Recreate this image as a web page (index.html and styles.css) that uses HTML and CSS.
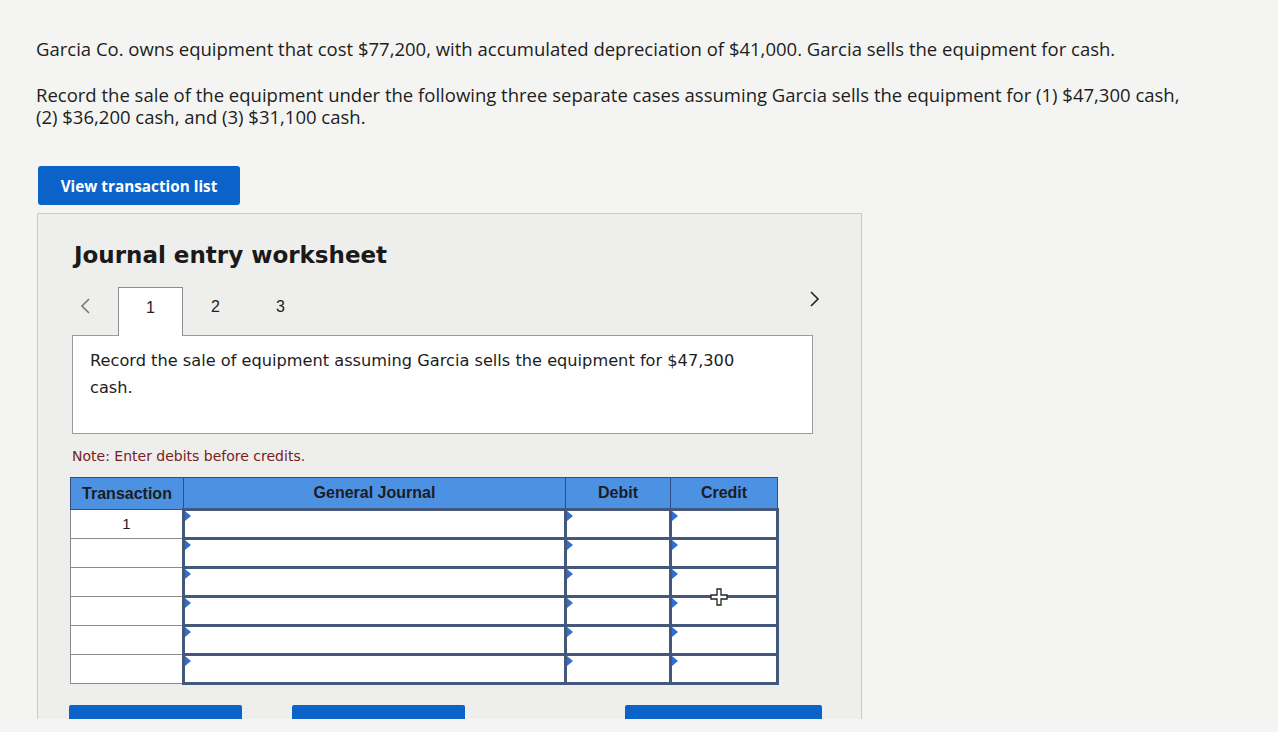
FILE: index.html
```html
<!DOCTYPE html>
<html>
<head>
<meta charset="utf-8">
<link rel="stylesheet" href="styles.css">
</head>
<body>
<div class="page">
  <p class="intro">Garcia Co. owns equipment that cost $77,200, with accumulated depreciation of $41,000. Garcia sells the equipment for cash.</p>
  <p class="intro second">Record the sale of the equipment under the following three separate cases assuming Garcia sells the equipment for (1) $47,300 cash, (2) $36,200 cash, and (3) $31,100 cash.</p>
  <button class="btn-list">View transaction list</button>

  <div class="panel">
    <h2 class="title">Journal entry worksheet</h2>
    <div class="tabs">
      <span class="chev left"><svg width="14" height="18" viewBox="0 0 14 18"><path d="M11 2 L4 9 L11 16" fill="none" stroke="#777" stroke-width="1.6"/></svg></span>
      <span class="tab active">1</span>
      <span class="tab">2</span>
      <span class="tab">3</span>
      <span class="spacer"></span>
      <span class="chev right"><svg width="14" height="18" viewBox="0 0 14 18"><path d="M3 2 L10 9 L3 16" fill="none" stroke="#222" stroke-width="1.6"/></svg></span>
    </div>
    <div class="question">
      <p>Record the sale of equipment assuming Garcia sells the equipment for $47,300 cash.</p>
    </div>
    <p class="note">Note: Enter debits before credits.</p>

    <table class="journal">
      <thead>
        <tr><th class="c-tx">Transaction</th><th class="c-gj">General Journal</th><th class="c-dr">Debit</th><th class="c-cr">Credit</th></tr>
      </thead>
      <tbody>
        <tr><td class="tx">1</td><td class="in"></td><td class="in"></td><td class="in"></td></tr>
        <tr><td class="tx"></td><td class="in"></td><td class="in"></td><td class="in"></td></tr>
        <tr><td class="tx"></td><td class="in"></td><td class="in"></td><td class="in"></td></tr>
        <tr><td class="tx"></td><td class="in"></td><td class="in"></td><td class="in cursor-cell"><svg class="cursor" width="18" height="18" viewBox="0 0 18 18"><path d="M7 1 H11 V7 H17 V11 H11 V17 H7 V11 H1 V7 H7 Z" fill="#fff" stroke="#222" stroke-width="1.3"/></svg></td></tr>
        <tr><td class="tx"></td><td class="in"></td><td class="in"></td><td class="in"></td></tr>
        <tr><td class="tx"></td><td class="in"></td><td class="in"></td><td class="in"></td></tr>
      </tbody>
    </table>

    <div class="actions">
      <button class="act a1"></button>
      <button class="act a2"></button>
      <button class="act a3"></button>
    </div>
  </div>
</div>
</body>
</html>
```

FILE: styles.css
```css
* { box-sizing: border-box; }
html, body { margin: 0; padding: 0; }
body {
  background: #f4f4f2;
  width: 1278px;
  height: 732px;
  overflow: hidden;
  font-family: "Open Sans", "Lato", sans-serif;
  color: #1d1d1d;
}
.page {
  padding: 38px 0 0 36px;
}
.intro {
  margin: 0;
  font-size: 18.5px;
  line-height: 22px;
  width: 1155px;
}
.intro.second {
  margin-top: 24px;
}
.btn-list {
  display: block;
  margin: 38px 0 0 2px;
  width: 202px;
  height: 39px;
  background: #0b62c9;
  color: #fff;
  border: none;
  border-radius: 3px;
  font-family: "Open Sans", sans-serif;
  font-weight: 700;
  font-size: 15.3px;
  text-align: center;
  padding: 0;
}
.panel {
  margin: 8px 0 0 1px;
  width: 825px;
  height: 506px;
  background: #eeeeec;
  border: 1px solid #c9c9c7;
  border-bottom: none;
  padding: 26px 0 0 34px;
  overflow: hidden;
}
.title {
  margin: 0;
  font-family: "DejaVu Sans", Verdana, sans-serif;
  font-weight: 700;
  font-size: 23px;
  line-height: 30px;
  color: #1a1a1a;
  padding-left: 2px;
}
.tabs {
  display: flex;
  align-items: flex-end;
  margin-top: 17px;
  width: 750px;
  height: 48px;
}
.chev {
  display: flex;
  align-items: center;
  height: 48px;
}
.chev.left { width: 46px; padding-left: 6px; padding-bottom: 10px; }
.chev.right { padding-bottom: 24px; }
.tab {
  width: 65px;
  height: 48px;
  display: flex;
  align-items: center;
  justify-content: center;
  font-family: "Liberation Sans", Arial, sans-serif;
  font-size: 16px;
  color: #222;
  padding-bottom: 8px;
}
.tab.active {
  background: #fff;
  border: 1px solid #8e8e8e;
  border-bottom: none;
  margin-bottom: -1px;
  height: 49px;
  position: relative;
  z-index: 1;
}
.spacer { flex: 1; }
.question {
  width: 741px;
  height: 99px;
  background: #fff;
  border: 1px solid #9c9c9c;
  padding: 11px 40px 0 17px;
}
.question p {
  margin: 0;
  font-family: "DejaVu Sans", Verdana, sans-serif;
  font-size: 16.2px;
  line-height: 27px;
  color: #1d1d1d;
}
.note {
  margin: 14px 0 0 0;
  font-family: "DejaVu Sans", Verdana, sans-serif;
  font-size: 14px;
  line-height: 17px;
  color: #7a1c1c;
}
.journal {
  margin-top: 12px;
  margin-left: -2px;
  border-collapse: collapse;
  table-layout: fixed;
  width: 707px;
}
.journal th {
  background: #4d91e2;
  border: 1px solid #2f4f86;
  height: 32px;
  font-family: "Liberation Sans", Arial, sans-serif;
  font-weight: 700;
  font-size: 16px;
  color: #1c1c24;
  padding: 0;
  text-align: center;
}
.c-tx { width: 113px; }
.c-gj { width: 382px; }
.c-dr { width: 105px; }
.c-cr { width: 107px; }
.journal td {
  height: 29px;
  background: #fff;
  padding: 0;
  font-family: "Liberation Sans", Arial, sans-serif;
  font-size: 15px;
  color: #222;
}
.journal td.tx {
  border: 1px solid #8a8a8a;
  text-align: center;
  vertical-align: top;
  padding-top: 5px;
}
.journal td.in {
  border: 3px solid #44587c;
  position: relative;
}
.journal td.in::before {
  content: "";
  position: absolute;
  left: 0;
  top: 0;
  border-top: 5px solid transparent;
  border-bottom: 5px solid transparent;
  border-left: 6px solid #2e6fd0;
}
.cursor {
  position: absolute;
  left: 38px;
  top: -10px;
}
.actions {
  display: flex;
  margin-top: 20px;
  margin-left: -3px;
}
.act {
  height: 30px;
  background: #0b62c9;
  border: none;
  border-radius: 2px;
  padding: 0;
}
.a1 { width: 173px; }
.a2 { width: 173px; margin-left: 50px; }
.a3 { width: 197px; margin-left: 160px; }
```
